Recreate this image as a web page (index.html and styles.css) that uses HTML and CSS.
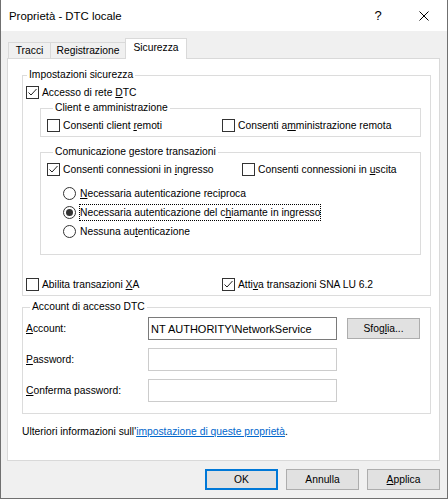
FILE: index.html
```html
<!DOCTYPE html>
<html lang="it">
<head>
<meta charset="utf-8">
<title>Proprietà - DTC locale</title>
<link rel="stylesheet" href="styles.css">
</head>
<body>
<div class="window">
  <header class="titlebar">
    <span class="title">Proprietà - DTC locale</span>
    <span class="capbtn help">?</span>
    <span class="capbtn close"><svg width="10" height="10" viewBox="0 0 10 10"><path d="M0.5 0.5L9.5 9.5M9.5 0.5L0.5 9.5" stroke="#000" stroke-width="1" fill="none"/></svg></span>
  </header>
  <div class="client">
    <div class="tabs">
      <div class="tab t1">Tracci</div>
      <div class="tab t2">Registrazione</div>
      <div class="tab selected">Sicurezza</div>
    </div>
    <div class="panel">
      <fieldset class="group outer sec">
        <legend>Impostazioni sicurezza</legend>
        <div class="row access"><span class="cb"><svg width="11" height="11" viewBox="0 0 11 11"><path d="M1.5 5.5L4 8L9.5 2" stroke="#222" stroke-width="1" fill="none"/></svg></span><span>Accesso di rete <u>D</u>TC</span></div>
        <fieldset class="group inner ca">
          <legend>Client e amministrazione</legend>
          <div class="pair p1">
            <div class="row"><span class="cb"></span><span>Consenti client <u>r</u>emoti</span></div>
            <div class="row"><span class="cb"></span><span>Consenti a<u>m</u>ministrazione remota</span></div>
          </div>
        </fieldset>
        <fieldset class="group inner comm">
          <legend>Comunicazione gestore transazioni</legend>
          <div class="pair p2">
            <div class="row"><span class="cb"><svg width="11" height="11" viewBox="0 0 11 11"><path d="M1.5 5.5L4 8L9.5 2" stroke="#222" stroke-width="1" fill="none"/></svg></span><span>Consenti connessioni in <u>i</u>ngresso</span></div>
            <div class="row"><span class="cb"></span><span>Consenti connessioni in <u>u</u>scita</span></div>
          </div>
          <div class="radios">
            <div class="rrow"><span class="rb"></span><span class="rl"><u>N</u>ecessaria autenticazione reciproca</span></div>
            <div class="rrow"><span class="rb on"></span><span class="rl focus">Necessaria autenticazione del c<u>h</u>iamante in ingresso</span></div>
            <div class="rrow"><span class="rb"></span><span class="rl">Nessuna au<u>t</u>enticazione</span></div>
          </div>
        </fieldset>
        <div class="pair p3">
          <div class="row"><span class="cb"></span><span>Abilita transazioni <u>X</u>A</span></div>
          <div class="row"><span class="cb"><svg width="11" height="11" viewBox="0 0 11 11"><path d="M1.5 5.5L4 8L9.5 2" stroke="#222" stroke-width="1" fill="none"/></svg></span><span>Atti<u>v</u>a transazioni SNA LU 6.2</span></div>
        </div>
      </fieldset>
      <fieldset class="group outer acct">
        <legend>Account di accesso DTC</legend>
        <div class="field">
          <label><u>A</u>ccount:</label>
          <input class="tb" type="text" value="NT AUTHORITY\NetworkService">
          <button class="btn">Sfog<u>l</u>ia...</button>
        </div>
        <div class="field">
          <label><u>P</u>assword:</label>
          <input class="tb" type="password" disabled>
        </div>
        <div class="field">
          <label><u>C</u>onferma password:</label>
          <input class="tb" type="password" disabled>
        </div>
      </fieldset>
      <p class="info">Ulteriori informazioni sull'<a href="#">impostazione di queste proprietà</a>.</p>
    </div>
    <div class="footer">
      <button class="btn default">OK</button>
      <button class="btn">Annulla</button>
      <button class="btn"><u>A</u>pplica</button>
    </div>
  </div>
</div>
</body>
</html>
```
FILE: styles.css
```css
* { box-sizing: border-box; }
html, body { margin: 0; }
body {
  background: #f0f0f0;
  font-family: "Liberation Sans", Arial, sans-serif;
  font-size: 10.3px;
  color: #000;
}
.window {
  width: 448px;
  height: 499px;
  border: 1px solid #707070;
  border-top: none;
  background: #f0f0f0;
  display: flex;
  flex-direction: column;
}
.titlebar {
  height: 31px;
  flex: none;
  background: #fff;
  display: flex;
  align-items: center;
  padding-left: 8px;
}
.title { font-size: 11.4px; line-height: 14px; }
.capbtn {
  width: 46px;
  height: 31px;
  display: flex;
  align-items: center;
  justify-content: center;
}
.help { margin-left: auto; font-size: 13px; }
.client {
  flex: 1;
  padding: 0 7px 0 6px;
  display: flex;
  flex-direction: column;
}
.tabs {
  height: 28px;
  margin-bottom: -1px;
  padding-left: 1px;
  display: flex;
  align-items: flex-end;
  flex: none;
}
.tab {
  height: 16px;
  margin-bottom: 1px;
  border: 1px solid #d9d9d9;
  border-bottom: none;
  background: #f0f0f0;
  display: flex;
  align-items: center;
  justify-content: center;
  line-height: 12px;
}
.t1 { width: 43px; }
.t2 { width: 76px; margin-left: -1px; }
.tab.selected {
  width: 62px;
  height: 21px;
  margin-bottom: 0;
  margin-left: -1px;
  padding-bottom: 2px;
  background: #fff;
  position: relative;
  z-index: 1;
}
.panel {
  height: 403px;
  flex: none;
  background: #fff;
  border: 1px solid #d9d9d9;
}
.group {
  border: 1px solid #dcdcdc;
  margin: 0;
  padding: 0;
  min-width: 0;
}
.group legend {
  padding: 0 2px;
  margin-left: 4px;
  height: 14px;
  line-height: 14px;
}
.group.inner legend { margin-left: 6px; }
.sec { margin: 9px 8px 0 14px; padding-bottom: 3px; }
.acct { margin: 4px 8px 0 14px; padding: 3px 0 11px 3px; }
.row {
  display: flex;
  align-items: center;
  height: 16px;
  white-space: nowrap;
}
.access { margin-top: 2px; padding-left: 3px; }
.cb {
  width: 13px;
  height: 13px;
  flex: none;
  border: 1px solid #333;
  background: #fff;
  margin-right: 3px;
  display: flex;
}
.inner { margin: 0 9px 0 17px; padding: 0 0 0 6px; }
.ca { margin-top: 1px; padding-bottom: 3px; }
.comm { margin-top: 8px; padding-bottom: 13px; }
.pair { display: grid; }
.p1 { grid-template-columns: 175px 1fr; padding-top: 2px; }
.p2 { grid-template-columns: 195px 1fr; margin-top: 2px; }
.p3 { grid-template-columns: 196px 1fr; margin-top: 21px; padding-left: 3px; }
.radios { margin-top: 7px; padding-left: 16px; }
.rrow {
  display: flex;
  align-items: center;
  height: 19px;
  white-space: nowrap;
}
.rb {
  width: 13px;
  height: 13px;
  flex: none;
  border: 1px solid #333;
  border-radius: 50%;
  background: #fff;
  margin-right: 3px;
  display: flex;
  align-items: center;
  justify-content: center;
}
.rb.on::after {
  content: "";
  width: 7px;
  height: 7px;
  border-radius: 50%;
  background: #333;
}
.rl { border: 1px solid transparent; line-height: 15px; }
.rl.focus { border: 1px dotted #000; }
.field {
  display: grid;
  grid-template-columns: 112px 189px 73px;
  column-gap: 10px;
  align-items: center;
  height: 23px;
}
.field + .field { margin-top: 8px; }
.tb {
  height: 23px;
  width: 189px;
  margin: 0;
  padding: 0 2px;
  border: 1px solid #7a7a7a;
  background: #fff;
  font-family: "Liberation Sans", Arial, sans-serif;
  font-size: 11px;
  color: #000;
  outline: none;
}
.tb:disabled { border-color: #cccccc; background: #fff; }
.btn {
  width: 73px;
  height: 21px;
  margin: 0;
  padding: 0;
  background: #e1e1e1;
  border: 1px solid #adadad;
  font-family: "Liberation Sans", Arial, sans-serif;
  font-size: 10.3px;
  color: #000;
}
.btn.default { border: 2px solid #0078d7; }
.info { margin: 11px 0 0 14px; line-height: 14px; }
.info a { color: #0066cc; text-decoration: underline; }
.footer {
  display: flex;
  justify-content: flex-end;
  gap: 8px;
  margin-top: 8px;
}
```
